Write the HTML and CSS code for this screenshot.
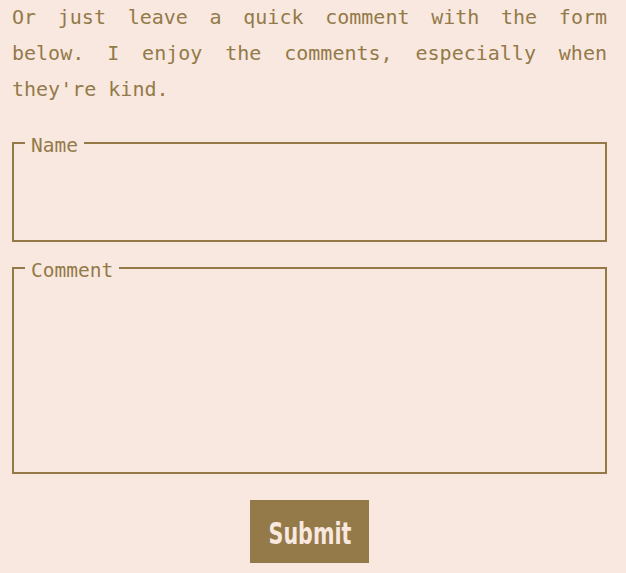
FILE: index.html
```html
<!DOCTYPE html>
<html>
<head>
<meta charset="utf-8">
<link rel="stylesheet" href="styles.css">
</head>
<body>
<div class="page">
  <p class="intro">Or just leave a quick comment with the form below. I enjoy the comments, especially when they're kind.</p>
  <form class="comment-form">
    <fieldset class="field field-name">
      <legend>Name</legend>
      <input class="field-input" type="text">
    </fieldset>
    <fieldset class="field field-comment">
      <legend>Comment</legend>
      <textarea class="field-input"></textarea>
    </fieldset>
    <div class="actions">
      <button class="submit" type="button"><span class="submit-label">Submit</span></button>
    </div>
  </form>
</div>
</body>
</html>
```
FILE: styles.css
```css
html, body {
  margin: 0;
  padding: 0;
  background: #f9e8e0;
}
.page {
  padding: 0 19px 0 12px;
  font-family: "DejaVu Sans Mono", "Liberation Mono", monospace;
  color: #937a48;
}
.intro {
  margin: -1px 0 0 0;
  font-size: 20px;
  line-height: 36px;
  text-align: justify;
}
.comment-form {
  margin: 23px 0 0 0;
}
.field {
  margin: 0;
  padding: 0 0 0 11px;
  border: 2px solid #957a48;
  min-width: 0;
}
.field + .field {
  margin-top: 13px;
}
.field legend {
  padding: 6px 6px 0 6px;
  font-size: 19.5px;
  line-height: 20px;
  color: #937a48;
}
.field-input {
  display: block;
  width: 100%;
  box-sizing: border-box;
  border: 0;
  background: transparent;
  outline: none;
  resize: none;
  margin: 0;
  padding: 0;
  font: inherit;
}
.field-name .field-input {
  height: 84px;
}
.field-comment .field-input {
  height: 191px;
}
.actions {
  display: flex;
  justify-content: center;
  margin-top: 26px;
}
.submit {
  width: 119px;
  height: 63px;
  border: 0;
  background: #947a48;
  color: #f9e8e0;
  font-family: "DejaVu Sans Condensed", "DejaVu Sans", sans-serif;
  font-weight: bold;
  font-size: 31px;
  line-height: 1;
  padding: 3px 0 0 0;
}
.submit-label {
  display: inline-block;
  transform: scaleX(0.74);
}
```
